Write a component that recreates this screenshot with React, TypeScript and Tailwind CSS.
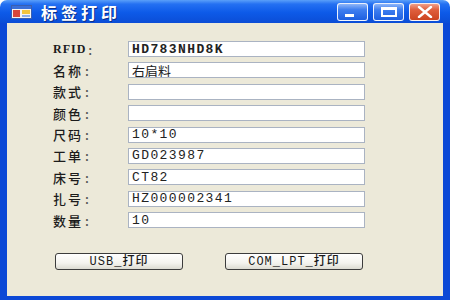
import React from 'react'

const rows = [
  { label: 'RFID', value: 'HD783NHD8K', mono: true, bold: true },
  { label: '名称', value: '右肩料', mono: false },
  { label: '款式', value: '', mono: false },
  { label: '颜色', value: '', mono: false },
  { label: '尺码', value: '10*10', mono: true },
  { label: '工单', value: 'GD023987', mono: true },
  { label: '床号', value: 'CT82', mono: true },
  { label: '扎号', value: 'HZ000002341', mono: true },
  { label: '数量', value: '10', mono: true },
]

function AppIcon() {
  return (
    <svg width="21" height="14" viewBox="0 0 21 14">
      <rect x="0.5" y="0.5" width="20" height="13" fill="#f4f4f4" stroke="#3a5fb0" />
      <rect x="1" y="1" width="19" height="3" fill="#3b6fd8" />
      <rect x="2" y="5" width="7" height="7" fill="#d9473a" />
      <rect x="11" y="5" width="8" height="4" fill="#f2c53d" />
      <rect x="11" y="10" width="8" height="2" fill="#8fb0e8" />
    </svg>
  )
}

function TitleButton({ kind }: { kind: 'min' | 'max' | 'close' }) {
  const bg =
    kind === 'close'
      ? 'bg-[linear-gradient(180deg,#f0a08a_0%,#e0603e_35%,#cc4420_100%)]'
      : 'bg-[linear-gradient(180deg,#8fb6f8_0%,#3f7ff0_35%,#1d5fe0_100%)]'
  return (
    <div className={`w-[31px] h-[18px] rounded-[3px] border border-white/90 flex items-center justify-center ${bg}`}>
      {kind === 'min' && <div className="w-[9px] h-[3px] bg-white mt-[8px] -ml-[6px]" />}
      {kind === 'max' && <div className="w-[16px] h-[10px] border-2 border-t-[3px] border-white" />}
      {kind === 'close' && (
        <svg width="16" height="12" viewBox="0 0 16 12">
          <path d="M2 1 L14 11 M14 1 L2 11" stroke="white" strokeWidth="2.4" strokeLinecap="round" />
        </svg>
      )}
    </div>
  )
}

function XpButton({ children, width }: { children: React.ReactNode; width: string }) {
  return (
    <div
      className={`${width} h-[17px] rounded-[3px] border border-[#3c3c3c] bg-[linear-gradient(180deg,#ffffff_0%,#f4f3ee_60%,#dcdbd2_100%)] flex items-center justify-center text-[12px] tracking-[1px] text-[#1a1a1a] font-medium`}
      style={{ fontFamily: '"Liberation Mono", "Noto Sans CJK SC", monospace' }}
    >
      {children}
    </div>
  )
}

export default function App() {
  return (
    <div className="w-[450px] h-[300px] flex flex-col bg-white" style={{ fontFamily: '"Noto Sans CJK SC", sans-serif' }}>
      {/* Title bar */}
      <div className="h-[23px] rounded-t-[7px] flex items-center pl-[11px] pr-[10px] bg-[linear-gradient(180deg,#5a9ff9_0%,#2470f2_18%,#0d5ae8_55%,#0b4dd6_100%)]">
        <AppIcon />
        <span className="ml-[9px] text-white font-bold text-[16px] tracking-[4px] leading-none [text-shadow:1px_1px_0_#0a2f8a]">
          标签打印
        </span>
        <div className="ml-auto flex gap-[5px]">
          <TitleButton kind="min" />
          <TitleButton kind="max" />
          <TitleButton kind="close" />
        </div>
      </div>

      {/* Client area */}
      <div className="flex-1 border-l-[7px] border-r-[7px] border-b-[4px] border-[#0b48d6] bg-[#ece9d9] flex flex-col">
        <div className="pt-[18px] pl-[46px] flex flex-col gap-[5.4px]">
          {rows.map((r) => (
            <div key={r.label} className="flex items-center h-[16px]">
              <div className="w-[75px] flex items-center text-[13px] text-[#1c1c1c] leading-none font-medium">
                {r.label === 'RFID' ? (
                  <span
                    className="font-bold tracking-[1px] text-[12px]"
                    style={{ fontFamily: '"Liberation Serif", serif' }}
                  >
                    RFID
                  </span>
                ) : (
                  <span className="tracking-[2px]">{r.label}</span>
                )}
                <span className="ml-[2px] text-[#555]">:</span>
              </div>
              <div className="w-[237px] h-[16px] bg-white border border-[#aab3c2] flex items-center pl-[3px] overflow-hidden">
                {r.mono ? (
                  <span
                    className={`text-[13px] tracking-[1.4px] text-[#222] leading-none ${r.bold ? 'font-bold' : ''}`}
                    style={{ fontFamily: '"Liberation Mono", monospace' }}
                  >
                    {r.value}
                  </span>
                ) : (
                  <span className="text-[13px] text-[#222] leading-none">{r.value}</span>
                )}
              </div>
            </div>
          ))}
        </div>

        <div className="mt-[25px] pl-[48px] flex gap-[42px]">
          <XpButton width="w-[128px]">USB_打印</XpButton>
          <XpButton width="w-[138px]">COM_LPT_打印</XpButton>
        </div>
      </div>
    </div>
  )
}
